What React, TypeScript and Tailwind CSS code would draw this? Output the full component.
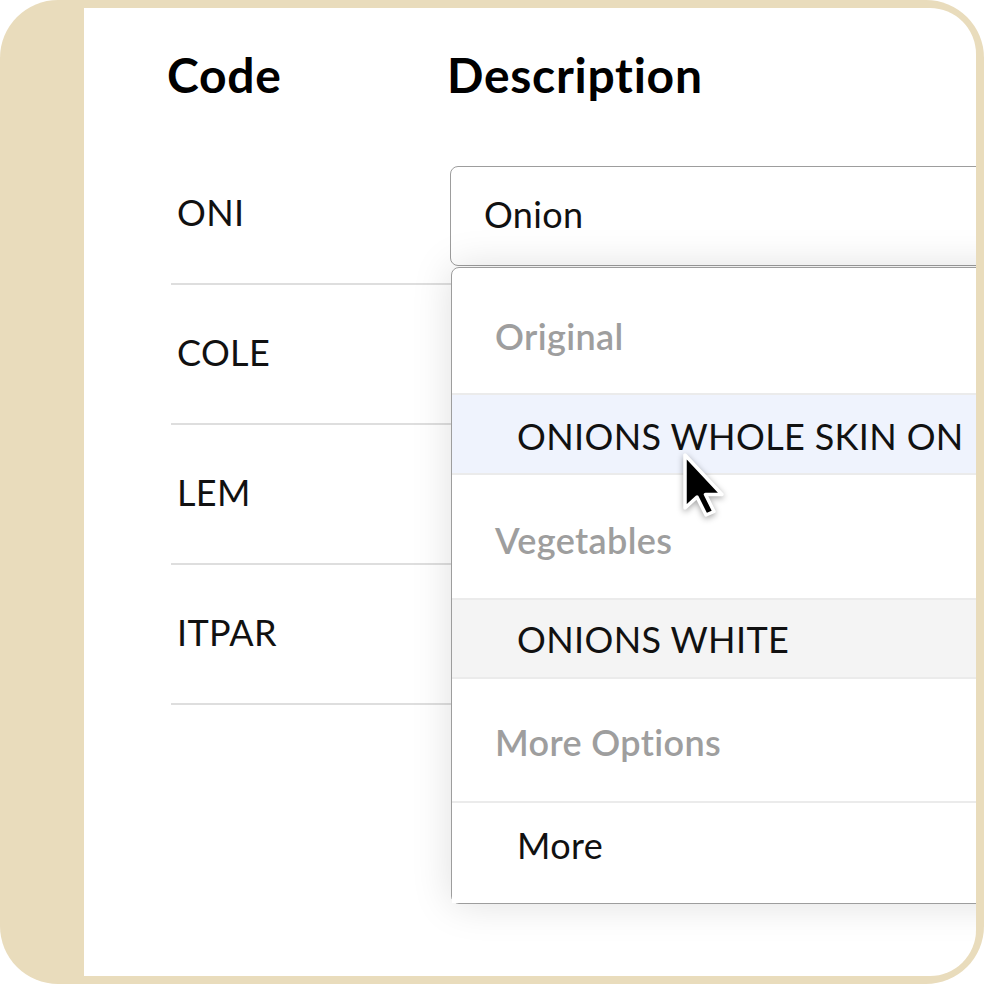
import React from 'react'

const rows = ['ONI', 'COLE', 'LEM', 'ITPAR']

type Entry = { kind: 'group' | 'item'; label: string; box: string; tone?: 'hover' | 'active' }

// heights and nudges measured off the reference
const entries: Entry[] = [
  { kind: 'group', label: 'Original', box: 'h-[125px] pt-[10px]' },
  { kind: 'item', label: 'ONIONS WHOLE SKIN ON', box: 'h-[80px] pt-[4px]', tone: 'hover' },
  { kind: 'group', label: 'Vegetables', box: 'h-[125px] pt-[7px]' },
  { kind: 'item', label: 'ONIONS WHITE', box: 'h-[79px] pt-[1px]', tone: 'active' },
  { kind: 'group', label: 'More Options', box: 'h-[124px] pt-[4px]' },
  { kind: 'item', label: 'More', box: 'h-[102px] pb-[16px]' },
]

function Cursor() {
  return (
    <svg
      width="48"
      height="68"
      viewBox="0 0 48 68"
      className="absolute left-[597px] top-[444px] z-20 drop-shadow-[0_2px_3px_rgba(0,0,0,0.35)]"
    >
      <path
        d="M4 3 L4 56 L16 45 L25 63 L33 59.5 L24.5 42.5 L41 42.5 Z"
        fill="#000"
        stroke="#fff"
        strokeWidth="3.5"
        strokeLinejoin="round"
      />
    </svg>
  )
}

function Dropdown() {
  return (
    <div className="absolute left-[1px] top-[122px] z-10 w-[620px] rounded-lg border-[1.5px] border-[#9d9d9d] bg-white shadow-[0_0_40px_rgba(0,0,0,0.13)]">
      {entries.map((e, i) => {
        const divider = i === 0 ? '' : 'border-t-2 border-[#ebebeb]'
        if (e.kind === 'group') {
          return (
            <div
              key={e.label}
              className={`flex items-center pl-[43px] text-[36px] font-semibold tracking-[0.01em] text-[#9e9e9e] ${e.box} ${divider}`}
            >
              {e.label}
            </div>
          )
        }
        const bg = e.tone === 'hover' ? 'bg-[#eff3fd]' : e.tone === 'active' ? 'bg-[#f4f4f4]' : 'bg-white'
        return (
          <div
            key={e.label}
            className={`flex items-center pl-[65px] text-[36px] tracking-[0.01em] text-[#111] ${bg} ${e.box} ${divider}`}
          >
            {e.label}
          </div>
        )
      })}
    </div>
  )
}

export default function App() {
  return (
    <div className="h-[984px] w-[985px] bg-white" style={{ fontFamily: 'Lato, "Noto Sans", sans-serif' }}>
      <div className="h-[984px] w-[984px] rounded-[58px] bg-[#e9dcbc] pb-[8px] pl-[84px] pr-[8px] pt-[8px]">
        <div className="relative h-full w-full overflow-hidden rounded-r-[46px] bg-white">
          {/* Header */}
          <div className="ml-[83px] grid h-[137px] grid-cols-[280px_1fr] items-center pb-[4px] text-[48px] font-bold tracking-[0.015em] text-black">
            <div>Code</div>
            <div>Description</div>
          </div>

          {/* Rows */}
          {rows.map((code, i) => (
            <div
              key={code}
              className="ml-[87px] grid h-[140px] grid-cols-[279px_1fr] border-b-2 border-[#dedede]"
            >
              <div className="flex items-center pb-[4px] pl-[6px] text-[36px] tracking-[0.01em] text-[#111]">{code}</div>
              {i === 0 ? (
                <div className="relative pt-[21px]">
                  <div className="flex h-[100px] w-[620px] items-center rounded-lg border-[1.5px] border-[#9d9d9d] bg-white pb-[4px] pl-[33px] text-[36px] tracking-[0.01em] text-[#111]">
                    Onion
                  </div>
                  <Dropdown />
                </div>
              ) : (
                <div />
              )}
            </div>
          ))}

          <Cursor />
        </div>
      </div>
    </div>
  )
}
